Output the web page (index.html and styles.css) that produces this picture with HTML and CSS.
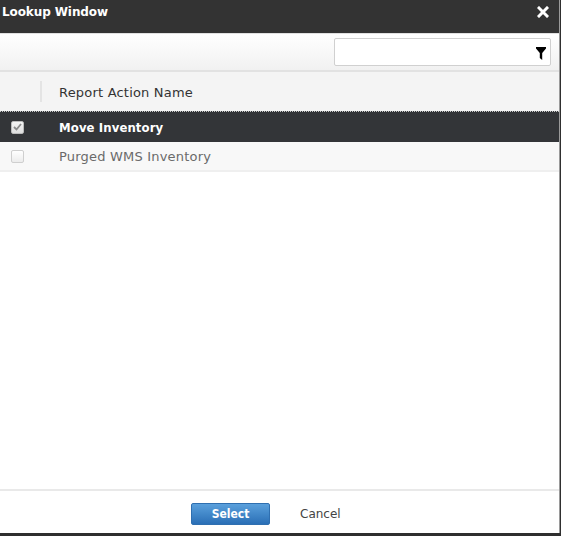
FILE: index.html
```html
<!DOCTYPE html>
<html>
<head>
<meta charset="utf-8">
<link rel="stylesheet" href="styles.css">
</head>
<body>
<div class="window">
  <div class="titlebar">
    <span class="title">Lookup Window</span>
    <span class="close" aria-label="close">
      <svg width="12" height="12" viewBox="0 0 12 12"><path d="M2 2 L10 10 M10 2 L2 10" stroke="#fff" stroke-width="3" stroke-linecap="square"/></svg>
    </span>
  </div>
  <div class="toolbar">
    <div class="filter">
      <svg class="funnel" width="10" height="13" viewBox="0 0 10 13"><path d="M0 0 H10 V1.5 L6.2 6 V13 L3.8 11 V6 L0 1.5 Z" fill="#000"/></svg>
    </div>
  </div>
  <div class="grid">
    <div class="row header">
      <div class="cell check"><span class="sep"></span></div>
      <div class="cell name">Report Action Name</div>
    </div>
    <div class="row selected">
      <div class="cell check"><span class="box checked"><svg width="9" height="8" viewBox="0 0 9 8"><path d="M1 4 L3.5 6.5 L8 1" stroke="#8a8a8a" stroke-width="1.8" fill="none"/></svg></span></div>
      <div class="cell name">Move Inventory</div>
    </div>
    <div class="row plain">
      <div class="cell check"><span class="box"></span></div>
      <div class="cell name">Purged WMS Inventory</div>
    </div>
  </div>
  <div class="footer">
    <button class="btn-select">Select</button>
    <span class="cancel">Cancel</span>
  </div>
</div>
</body>
</html>
```
FILE: styles.css
```css
html, body {
  margin: 0;
  padding: 0;
}
body {
  background: #2f2f2f;
  width: 561px;
  height: 536px;
  overflow: hidden;
  font-family: "DejaVu Sans", Verdana, sans-serif;
}
.window {
  width: 559px;
  height: 533px;
  background: #fff;
  border-right: 1px solid #9a9a9a;
  display: flex;
  flex-direction: column;
}
.titlebar {
  height: 33px;
  background: #333333;
  display: flex;
  align-items: center;
  justify-content: space-between;
  padding: 0 10px 0 2px;
  box-sizing: border-box;
}
.title {
  color: #fff;
  font-weight: bold;
  font-size: 12px;
  margin-top: -10px;
  letter-spacing: -0.1px;
}
.close {
  display: flex;
  margin-top: -10px;
}
.toolbar {
  height: 39px;
  box-sizing: border-box;
  background: linear-gradient(#ffffff, #f1f1f1);
  border-top: 1px solid #e0e0e0;
  border-bottom: 2px solid #e2e2e2;
  display: flex;
  justify-content: flex-end;
  align-items: center;
  padding-right: 8px;
}
.filter {
  width: 217px;
  height: 28px;
  box-sizing: border-box;
  background: #fff;
  border: 1px solid #d0d0d0;
  border-radius: 2px;
  display: flex;
  justify-content: flex-end;
  align-items: center;
  padding-right: 4px;
}
.funnel {
  margin-top: 2px;
}
.grid {
  flex: 1;
  background: #fff;
}
.row {
  display: flex;
  align-items: center;
  font-size: 13px;
}
.cell.check {
  width: 42px;
  height: 100%;
  display: flex;
  align-items: center;
  position: relative;
}
.cell.name {
  padding-left: 17px;
  letter-spacing: 0.2px;
}
.header {
  height: 39px;
  background: #f4f4f4;
  color: #333;
}
.header .name {
  margin-top: 2px;
}
.sep {
  position: absolute;
  right: 0;
  top: 9px;
  width: 2px;
  height: 21px;
  background: #e4e4e4;
}
.selected {
  height: 31px;
  background: #333538;
  color: #fff;
  border-top: 1px dotted #c9c9c9;
  box-sizing: border-box;
}
.selected .name {
  font-family: "DejaVu Sans Condensed", "DejaVu Sans", sans-serif;
  font-weight: bold;
  letter-spacing: 0.1px;
}
.plain {
  height: 30px;
  background: #f8f8f8;
  color: #6a6a6a;
  border-bottom: 2px solid #efefef;
  box-sizing: border-box;
}
.box {
  margin-left: 11px;
  width: 13px;
  height: 13px;
  box-sizing: border-box;
  border: 1px solid #cfcfcf;
  border-radius: 2px;
  background: linear-gradient(#ffffff, #ececec);
  display: flex;
  align-items: center;
  justify-content: center;
}
.box.checked {
  background: linear-gradient(#f4f4f4, #dedede);
  border-color: #bbb;
}
.footer {
  height: 42px;
  border-top: 2px solid #e9e9e9;
  display: flex;
  align-items: center;
  padding-left: 191px;
  gap: 30px;
}
.btn-select {
  width: 79px;
  height: 22px;
  border: 1px solid #2f6fb0;
  border-radius: 2px;
  background: linear-gradient(#5aa0dc, #2a6fb6);
  color: #fff;
  font-family: "DejaVu Sans Condensed", "DejaVu Sans", sans-serif;
  font-size: 12px;
  font-weight: bold;
  padding: 0;
  margin-top: 3px;
}
.cancel {
  font-size: 12px;
  color: #444;
  margin-top: 3px;
}
```
